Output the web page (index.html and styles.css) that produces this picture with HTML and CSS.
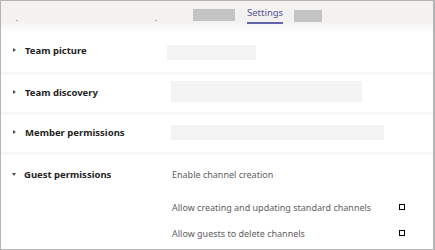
FILE: index.html
```html
<!DOCTYPE html>
<html lang="en">
<head>
  <meta charset="UTF-8" />
  <title>Team settings</title>
  <link rel="stylesheet" href="styles.css">
</head>
<body>

<div class="frame">
  <header class="tabs">
    <span class="speck speck-first"></span>
    <span class="speck speck-second"></span>
    <span class="tab-blank tab-blank-left"></span>
    <span class="tab active">Settings</span>
    <span class="tab-blank tab-blank-right"></span>
  </header>

  <section class="row row-picture">
    <div class="label"><span class="caret"></span>Team picture</div>
    <div class="placeholder ph-picture"></div>
  </section>

  <section class="row">
    <div class="label"><span class="caret"></span>Team discovery</div>
    <div class="placeholder ph-discovery"></div>
  </section>

  <section class="row">
    <div class="label"><span class="caret"></span>Member permissions</div>
    <div class="placeholder ph-member"></div>
  </section>

  <section class="row open">
    <div class="label"><span class="caret down"></span>Guest permissions</div>
    <div class="options">
      <div class="option heading">Enable channel creation</div>
      <div class="option">
        <span>Allow creating and updating standard channels</span>
        <span class="check"></span>
      </div>
      <div class="option">
        <span>Allow guests to delete channels</span>
        <span class="check"></span>
      </div>
    </div>
  </section>
</div>

</body>
</html>
```

FILE: styles.css
```css
:root {
  --border: rgb(180, 180, 180);
  --header-bg: rgb(243, 242, 241);
  --tab-blank: rgb(196, 196, 196);
  --placeholder: rgb(243, 243, 243);
  --separator: rgb(247, 247, 247);
  --text: rgb(37, 36, 35);
  --muted: rgb(97, 97, 97);
  --primary: rgb(98, 100, 167);
}

body {
  margin: 0;
  font-family: 'Noto Sans', 'Open Sans', sans-serif;
  background: #fff;
}

.frame {
  width: 435px;
  height: 250px;
  box-sizing: border-box;
  border: 1px solid var(--border);
  border-right-width: 2px;
  overflow: hidden;
  display: flex;
  flex-direction: column;
}

/* tab strip */
.tabs {
  height: 34px;
  flex-shrink: 0;
  display: flex;
  align-items: flex-start;
  background: linear-gradient(var(--header-bg) 0, var(--header-bg) 21px, #fff 32px);
}

.speck {
  width: 2px;
  height: 1px;
  margin-top: 19px;
  background: rgb(170, 170, 170);
}

.speck-first {
  margin-left: 15px;
}

.speck-second {
  margin-left: 137px;
}

.tab-blank {
  height: 12px;
  background: var(--tab-blank);
}

.tab-blank-left {
  width: 42px;
  margin-left: 36px;
  margin-top: 8px;
}

.tab-blank-right {
  width: 28px;
  margin-left: 11px;
  margin-top: 9px;
}

.tab {
  margin-left: 12px;
  margin-top: 5px;
  font-size: 9.5px;
  line-height: 14px;
  color: rgb(80, 82, 150);
  padding-bottom: 2px;
  border-bottom: 2px solid var(--primary);
}

/* settings rows */
.row {
  height: 37px;
  flex-shrink: 0;
  display: flex;
  align-items: flex-start;
  border-bottom: 3px solid var(--separator);
}

.row.open {
  flex: 1;
  border-bottom: none;
}

.label {
  width: 170px;
  flex-shrink: 0;
  display: flex;
  align-items: center;
  height: 14px;
  margin-top: 10px;
  font-size: 9.5px;
  font-weight: bold;
  color: var(--text);
}

.row-picture .label {
  margin-top: 8px;
}

.open .label {
  margin-top: 12px;
}

.caret {
  width: 0;
  height: 0;
  margin: 0 9px 0 12px;
  border-top: 2px solid transparent;
  border-bottom: 2px solid transparent;
  border-left: 3px solid rgb(80, 80, 80);
}

.caret.down {
  margin: 0 8px 0 11px;
  border-left: 2px solid transparent;
  border-right: 2px solid transparent;
  border-top: 3px solid rgb(80, 80, 80);
  border-bottom: none;
}

.placeholder {
  background: var(--placeholder);
}

.ph-picture {
  width: 89px;
  height: 15px;
  margin-left: -4px;
  margin-top: 10px;
}

.ph-discovery {
  width: 191px;
  height: 21px;
  margin-top: 6px;
}

.ph-member {
  width: 213px;
  height: 15px;
  margin-top: 10px;
}

.options {
  padding-top: 12px;
  width: 233px;
  margin-left: 1px;
}

.option {
  display: flex;
  align-items: center;
  justify-content: space-between;
  font-size: 9px;
  color: var(--muted);
  height: 14px;
  margin-top: 12px;
}

.option.heading {
  margin-top: 0;
  margin-bottom: 19px;
}

.check {
  width: 4px;
  height: 4px;
  border: 1.5px solid #000;
}
```
